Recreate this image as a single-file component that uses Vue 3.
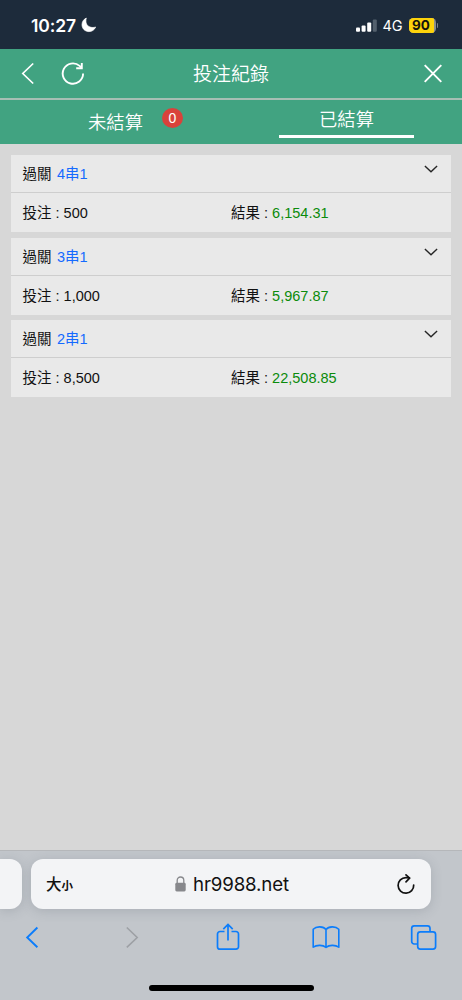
<script setup>
const bets = [
  { type: '4串1', stake: '500', result: '6,154.31' },
  { type: '3串1', stake: '1,000', result: '5,967.87' },
  { type: '2串1', stake: '8,500', result: '22,508.85' },
]
</script>

<template>
  <div class="screen">
    <div class="status">
      <span class="clock">10:27</span>
      <svg class="moon" width="16" height="16" viewBox="0 0 16 16">
        <path d="M5.300 1.100C2.700 2.200 1 4.800 1 7.700c0 3.900 3.100 6.900 7 6.900 3 0 5.600-1.800 6.600-4.600-.9.400-1.800.5-2.700.5-4.200 0-7-2.600-7-6.400 0-1 .1-2 .4-3z" fill="#fff" stroke="#fff" stroke-width=".7" stroke-linejoin="round" />
      </svg>
      <svg class="signal" width="21" height="13" viewBox="0 0 21 13">
        <rect x="0" y="8.500" width="4" height="4.300" rx="1" fill="#fff" />
        <rect x="5.600" y="6.500" width="4" height="6.300" rx="1" fill="#fff" />
        <rect x="11.200" y="3.500" width="4" height="9.300" rx="1" fill="#fff" />
        <rect x="16.800" y="0.600" width="4" height="12.200" rx="1" fill="#53606d" />
      </svg>
      <span class="network">4G</span>
      <span class="battery"><span class="level">90</span></span>
      <span class="nub"></span>
    </div>

    <header class="nav">
      <svg class="nav-back" width="14" height="24" viewBox="0 0 14 24">
        <path d="M12.200 1.500L1.800 11.500l10.400 10" fill="none" stroke="#fff" stroke-width="1.700" />
      </svg>
      <svg class="nav-refresh" width="24" height="24" viewBox="0 0 24 24" fill="none" stroke="#fff" stroke-width="1.900">
        <path d="M22.100 11.500A10.200 10.200 0 1 1 18.600 3.900L20.400 5.600" />
        <path d="M20.800 1v5.300h-5.600" />
      </svg>
      <h1>投注紀錄</h1>
      <svg class="nav-close" width="20" height="20" viewBox="0 0 20 20">
        <path d="M1.700 1.200l16.600 16.600M18.300 1.200L1.700 17.800" fill="none" stroke="#fff" stroke-width="1.900" />
      </svg>
    </header>

    <nav class="tabs">
      <div class="tab">未結算<span class="badge">0</span></div>
      <div class="tab active"><span class="label">已結算</span></div>
    </nav>

    <main class="list">
      <section v-for="bet in bets" :key="bet.type" class="card">
        <div class="head">
          <span>過關</span><span class="type">{{ bet.type }}</span>
          <svg class="chevron" width="14" height="8" viewBox="0 0 14 8">
            <path d="M.9.9L7 6.700 13.100.9" fill="none" stroke="#252525" stroke-width="1.400" />
          </svg>
        </div>
        <div class="body">
          <div>投注 : {{ bet.stake }}</div>
          <div>結果 : <span class="win">{{ bet.result }}</span></div>
        </div>
      </section>
    </main>

    <footer class="browser">
      <div class="address-row">
        <div class="prev-tab"></div>
        <div class="address">
          <span class="text-size">大<small>小</small></span>
          <span class="site">
            <svg width="11" height="16" viewBox="0 0 11 16">
              <path d="M2.200 8V4.300a3.300 3.300 0 0 1 6.600 0V8" fill="none" stroke="#87888c" stroke-width="1.300" />
              <rect x=".3" y="6.800" width="10.400" height="8.600" rx="1.400" fill="#87888c" />
            </svg>
            <span class="domain">hr9988.net</span>
          </span>
          <svg class="reload" width="18" height="21" viewBox="0 0 18 21" fill="none" stroke="#111" stroke-width="1.700" stroke-linecap="round" stroke-linejoin="round">
            <path d="M16.700 11A7.800 7.800 0 1 1 8.900 3.600c1.200 0 2.400.1 3.500.4" />
            <path d="M9 .9l3.600 3.300L9 7.800" />
          </svg>
        </div>
      </div>
      <div class="toolbar">
        <svg width="26" height="30" viewBox="0 0 26 30">
          <path d="M18.400 5.500L8.200 15.500l10.200 9.800" fill="none" stroke="#0c7dfb" stroke-width="1.900" />
        </svg>
        <svg width="26" height="30" viewBox="0 0 26 30">
          <path d="M7.800 5.500L18.200 15.500 7.800 25.300" fill="none" stroke="#9da0a5" stroke-width="1.600" />
        </svg>
        <svg width="26" height="30" viewBox="0 0 26 30" fill="none" stroke="#0c7dfb" stroke-width="1.700">
          <path d="M9.500 9.500H5a2.500 2.500 0 0 0-2.500 2.500v12.700A2.500 2.500 0 0 0 5 27.200h16a2.500 2.500 0 0 0 2.500-2.500V12A2.500 2.500 0 0 0 21 9.500h-4.500M13 18.500V2.500M8.300 7.200L13 2.500l4.700 4.700" />
        </svg>
        <svg width="28" height="30" viewBox="0 0 28 30" fill="none" stroke="#0c7dfb" stroke-width="1.600" stroke-linejoin="round">
          <path d="M14 7.500C11.500 4.200 4.500 3.800 1.200 7.200v18c3.600-2.600 9.700-2.300 12.800.2 3.100-2.500 9.200-2.800 12.800-.2v-18C23.500 3.800 16.500 4.200 14 7.500zM14 7.500v17.900" />
        </svg>
        <svg width="28" height="30" viewBox="0 0 28 30" fill="none" stroke="#0c7dfb" stroke-width="1.700">
          <path d="M7.500 22H4.200A2.500 2.500 0 0 1 1.700 19.500V6.300a2.500 2.500 0 0 1 2.500-2.500h13.300A2.500 2.500 0 0 1 20 6.300V9.500" />
          <rect x="7.700" y="9.800" width="17.900" height="17.400" rx="2.600" />
        </svg>
      </div>
      <div class="home"></div>
    </footer>
  </div>
</template>

<style>
body {
  margin: 0;
}
</style>

<style scoped>
.screen {
  box-sizing: border-box;
  width: 462px;
  height: 1000px;
  display: flex;
  flex-direction: column;
  overflow: hidden;
  background: #d7d7d7;
  font-family: "Liberation Sans", "Noto Sans CJK TC", sans-serif;
  color: #111;
}
svg {
  display: block;
  flex: none;
}
.status {
  height: 49px;
  flex: none;
  display: flex;
  align-items: center;
  box-sizing: border-box;
  padding: 1px 24px 0 31px;
  background: #1d2b3b;
  color: #fff;
  font-family: Inter, sans-serif;
}
.clock {
  width: 50px;
  font-size: 17.500px;
  font-weight: 600;
  letter-spacing: -0.100px;
  white-space: nowrap;
}
.signal {
  margin-left: auto;
}
.network {
  width: 26px;
  margin: 1px 0 0 6px;
  font-size: 14.500px;
  letter-spacing: -0.200px;
}
.battery {
  width: 27px;
  height: 15px;
  border-radius: 4.500px;
  background: #8b8e8f;
  overflow: hidden;
}
.level {
  display: block;
  width: 25px;
  height: 15px;
  background: #fdd30b;
  color: #15150c;
  font-size: 13.500px;
  font-weight: 700;
  line-height: 15px;
  text-align: center;
}
.nub {
  width: 1.500px;
  height: 5px;
  margin-left: 1px;
  border-radius: 0 2px 2px 0;
  background: #7b8289;
}
.nav {
  height: 49px;
  flex: none;
  display: grid;
  grid-template-columns: 40px 52px 1fr 92px;
  align-items: center;
  background: #41a381;
  color: #fff;
}
.nav-back,
.nav-refresh {
  margin-left: 21px;
}
.nav h1 {
  margin: 0;
  padding-top: 2px;
  font-size: 19px;
  font-weight: 350;
  line-height: 28px;
  text-align: center;
}
.nav-close {
  justify-self: end;
  margin-right: 19px;
}
.tabs {
  height: 46px;
  flex: none;
  box-sizing: border-box;
  border-top: 2px solid #a6bfb4;
  display: flex;
  background: #41a381;
  color: #fff;
  font-size: 18.300px;
  font-weight: 350;
}
.tab {
  position: relative;
  width: 231px;
  line-height: 45px;
  text-align: center;
}
.badge {
  position: absolute;
  left: 162px;
  top: 8px;
  width: 21px;
  height: 20px;
  border-radius: 50%;
  background: #d9423b;
  font-size: 14px;
  line-height: 20px;
}
.tab.active {
  display: flex;
  flex-direction: column;
  align-items: center;
}
.label {
  width: 135px;
  height: 38px;
  box-sizing: border-box;
  border-bottom: 3px solid #fff;
  line-height: 39px;
}
.list {
  flex: 1;
  display: flex;
  flex-direction: column;
  gap: 5.500px;
  padding: 11px 11px 0;
  font-size: 14.500px;
}
.card {
  height: 77px;
  background: #e9e9e9;
}
.head {
  height: 38px;
  box-sizing: border-box;
  display: flex;
  align-items: center;
  padding: 0 13px 2px 11.500px;
  border-bottom: 1px solid #cecece;
}
.type {
  margin-left: 5.500px;
  color: #156aff;
}
.chevron {
  margin: -7px 0 0 auto;
}
.body {
  height: 39px;
  box-sizing: border-box;
  display: grid;
  grid-template-columns: 208.500px 1fr;
  align-items: center;
  padding: 0 0 1.500px 11.500px;
}
.win {
  color: #0b8b0b;
}
.browser {
  height: 150px;
  flex: none;
  box-sizing: border-box;
  border-top: 1px solid #b5b7ba;
  background: #c2c6cb;
  overflow: hidden;
}
.address-row {
  display: flex;
  gap: 9px;
  padding-top: 8px;
}
.prev-tab {
  width: 22px;
  height: 50px;
  border-radius: 0 12px 12px 0;
  background: #f3f4f6;
  box-shadow: 0 2px 12px rgba(70, 80, 95, 0.2);
}
.address {
  width: 400px;
  height: 50px;
  box-sizing: border-box;
  display: grid;
  grid-template-columns: 60px 1fr 60px;
  align-items: center;
  padding: 0 16px 0 15px;
  border-radius: 12px;
  background: #f3f4f6;
  box-shadow: 0 2px 12px rgba(70, 80, 95, 0.2);
}
.text-size {
  padding-top: 3px;
  font-size: 15.500px;
  font-weight: 500;
  line-height: 24px;
}
.text-size small {
  font-size: 11.500px;
  font-weight: 700;
}
.site {
  display: flex;
  align-items: center;
  justify-content: center;
  gap: 7px;
  padding-left: 3px;
}
.domain {
  font-family: Inter, sans-serif;
  font-size: 18.700px;
  letter-spacing: -0.150px;
}
.reload {
  justify-self: end;
}
.toolbar {
  display: flex;
  justify-content: space-between;
  padding: 13px 24px 0 19px;
}
.toolbar svg:nth-child(2) {
  margin-left: 3px;
}
.home {
  width: 165px;
  height: 6px;
  margin: 33px auto 0;
  border-radius: 3px;
  background: #000;
}
</style>
